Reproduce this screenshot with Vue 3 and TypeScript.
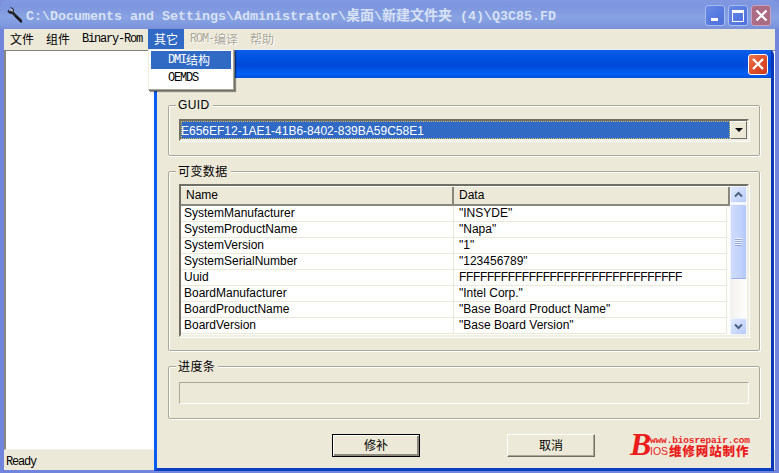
<script setup lang="ts">
interface Row { name: string; data: string }
const rows: Row[] = [
  { name: 'SystemManufacturer', data: '"INSYDE"' },
  { name: 'SystemProductName', data: '"Napa"' },
  { name: 'SystemVersion', data: '"1"' },
  { name: 'SystemSerialNumber', data: '"123456789"' },
  { name: 'Uuid', data: 'FFFFFFFFFFFFFFFFFFFFFFFFFFFFFFFF' },
  { name: 'BoardManufacturer', data: '"Intel Corp."' },
  { name: 'BoardProductName', data: '"Base Board Product Name"' },
  { name: 'BoardVersion', data: '"Base Board Version"' }
]
</script>

<template>
  <div class="win">
    <header class="titlebar">
      <svg class="appicon" width="17" height="17" viewBox="0 0 17 17">
        <path d="M1 2.5 L3 4.6 L5 3.6 L4.6 1.4 L2.6 .4 L5.2 .6 L7 2.4 L6.8 5 L15 13 L13.6 15.6 L5 7 L2.6 6.8 L.6 5 Z" fill="#26282e" />
        <path d="M8.6 8.4 L15.4 14.6 L14.4 16 L7.6 9.6 Z" fill="#15161a" />
        <path d="M3.4 1.6 L5.8 2.4 L6 4.4 L4.8 4.2 Z" fill="#c9ced8" />
      </svg>
      <div class="title">C:\Documents and Settings\Administrator\<span class="tcjk">桌面</span>\<span class="tcjk">新建文件夹</span> (4)\Q3C85.FD</div>
      <div class="caps">
        <button class="cap"><i class="min"></i></button>
        <button class="cap"><i class="max"></i></button>
        <button class="cap closeoff">
          <svg width="13" height="13" viewBox="0 0 13 13"><path d="M1.5 1.5 L11.5 11.5 M11.5 1.5 L1.5 11.5" stroke="#fff" stroke-width="2.2" /></svg>
        </button>
      </div>
    </header>

    <div class="frame">
      <nav class="menubar">
        <span class="mi cjk">文件</span>
        <span class="mi cjk">组件</span>
        <span class="mi mono">Binary-Rom</span>
        <span class="mi cjk active">其它</span>
        <span class="mi off"><span class="mono">ROM-</span><span class="cjk">编译</span></span>
        <span class="mi off cjk">帮助</span>
      </nav>
      <div class="client">
        <div class="leftpane"></div>
        <div class="status mono">Ready</div>
      </div>
    </div>

    <section class="dialog">
      <div class="dlgtitle">
        <button class="dlgclose">
          <svg width="14" height="14" viewBox="0 0 14 14"><path d="M2 2 L12 12 M12 2 L2 12" stroke="#fff" stroke-width="2.3" /></svg>
        </button>
      </div>
      <div class="dlgbody">
        <div class="group g1">
          <span class="legend">GUID</span>
          <div class="combo">
            <div class="comboval"><span>E656EF12-1AE1-41B6-8402-839BA59C58E1</span></div>
            <div class="combobtn"><i></i></div>
          </div>
        </div>

        <div class="group g2">
          <span class="legend cjkui">可变数据</span>
          <div class="list">
            <div class="listmain">
              <div class="lhead">
                <div class="hc c1">Name</div>
                <div class="hc c2">Data</div>
              </div>
              <div v-for="r in rows" :key="r.name" class="lrow">
                <div class="cell c1">{{ r.name }}</div>
                <div class="cell c2" :class="{ tight: r.name === 'Uuid' }">{{ r.data }}</div>
              </div>
            </div>
            <div class="sbar">
              <div class="sbtn">
                <svg width="9" height="7" viewBox="0 0 9 7"><path d="M1 5.5 L4.5 2 L8 5.5" fill="none" stroke="#4d6185" stroke-width="2" /></svg>
              </div>
              <div class="thumb"><i></i><i></i><i></i><i></i></div>
              <div class="track"></div>
              <div class="sbtn">
                <svg width="9" height="7" viewBox="0 0 9 7"><path d="M1 1.5 L4.5 5 L8 1.5" fill="none" stroke="#4d6185" stroke-width="2" /></svg>
              </div>
            </div>
          </div>
        </div>

        <div class="group g3">
          <span class="legend cjkui">进度条</span>
          <div class="progress"></div>
        </div>

        <div class="footer">
          <button class="btn default cjkui">修补</button>
          <button class="btn cjkui second">取消</button>
          <div class="logo">
            <span class="logob">B</span>
            <div class="logotext">
              <div class="logourl">www.biosrepair.com</div>
              <div class="logoline"><span class="logoios">IOS</span><span class="logocn">维修网站制作</span></div>
            </div>
          </div>
        </div>
      </div>
    </section>

    <div class="dropdown">
      <div class="ddi sel"><span class="mono">DMI</span><span class="cjk">结构</span></div>
      <div class="ddi"><span class="mono">OEMDS</span></div>
    </div>
  </div>
</template>

<style>
html, body { margin: 0; background: #7b8fdc; }
</style>

<style scoped>
.win {
  position: relative;
  width: 779px;
  height: 473px;
  overflow: hidden;
  background: #7285dc;
  border-radius: 7px 7px 0 0;
  display: flex;
  flex-direction: column;
  font-family: "Liberation Sans", Arial, sans-serif;
  font-size: 12px;
  color: #000;
}
.titlebar {
  height: 29px;
  flex: none;
  display: flex;
  align-items: center;
  padding: 0 8px 0 7px;
  box-sizing: border-box;
  background: linear-gradient(180deg, #8299e2 0%, #7c95de 20%, #89a2e2 60%, #7f99e0 85%, #7a90da 100%);
}
.appicon { flex: none; margin-right: 2px; margin-top: 2px; }
.title {
  flex: 1;
  font: bold 13.33px "Liberation Mono", monospace;
  color: #d6e1f6;
  white-space: nowrap;
  margin-top: 2px;
}
.tcjk { font: 14px "Noto Sans CJK SC", sans-serif; font-weight: 700; line-height: 1; }
.caps { display: flex; gap: 3px; margin-top: 2px; }
.cap {
  width: 20px;
  height: 21px;
  padding: 0;
  border: 1px solid #a9bcf0;
  border-radius: 3px;
  background: linear-gradient(135deg, #6a8ae4 0%, #587be0 50%, #4d70dc 100%);
  display: flex;
  align-items: center;
  justify-content: center;
  position: relative;
}
.closeoff {
  background: #ac6b85;
  border-color: #c7a3bd;
}
.min { display: block; width: 7px; height: 3px; background: #fff; margin: 7px 0 0 -1px; }
.max { display: block; width: 10px; height: 8px; border: 1px solid #fff; border-top-width: 3px; }
.frame {
  flex: 1;
  display: flex;
  flex-direction: column;
  padding: 0 4px 3px;
  min-height: 0;
}
.menubar {
  height: 20px;
  flex: none;
  display: flex;
  align-items: stretch;
  background: #ece9d8;
}
.mi {
  padding: 0 6px;
  display: flex;
  align-items: center;
  white-space: nowrap;
}
.active { background: #316ac5; color: #fff; }
.off { color: #aca899; text-shadow: 1px 1px 0 #fff; }
.cjk { font: 12px "Noto Sans CJK SC", sans-serif; padding-bottom: 2px; }
.cjkui { font: 12px "Noto Sans CJK SC", sans-serif; }
.mono {
  font: 12px "Liberation Mono", monospace;
  letter-spacing: -1.2px;
}
.client {
  flex: 1;
  display: flex;
  flex-direction: column;
  min-height: 0;
  background: #ece9d8;
}
.leftpane {
  flex: 1;
  margin-top: 1px;
  background: #fff;
  border-top: 1px solid #808080;
  border-left: 2px solid #8a887c;
  border-bottom: 1px solid #f4f2e8;
}
.status {
  height: 20px;
  flex: none;
  box-sizing: border-box;
  padding: 3px 0 0 2px;
  display: flex;
  align-items: center;
}
.dialog {
  position: absolute;
  left: 154px;
  top: 49px;
  width: 620px;
  height: 422px;
  box-sizing: border-box;
  border: 3px solid #0a47d8;
  border-top: 1px solid #e8effc;
  border-left-color: #0b5cf0;
  border-bottom-color: #0a3fc4;
  border-right-color: #0836b8;
  border-radius: 6px 6px 0 0;
  background: #ece9d8;
  display: flex;
  flex-direction: column;
}
.dlgtitle {
  height: 28px;
  flex: none;
  display: flex;
  justify-content: flex-end;
  align-items: center;
  padding-right: 3px;
  background: linear-gradient(180deg, #0a5de8 0%, #0054e3 25%, #0048d8 55%, #0060f4 85%, #0050dc 100%);
}
.dlgclose {
  width: 20px;
  height: 21px;
  padding: 0;
  border: 1px solid #fff;
  border-radius: 3px;
  background: linear-gradient(135deg, #e8774f 0%, #e0502c 50%, #c8381e 100%);
  display: flex;
  align-items: center;
  justify-content: center;
}
.dlgbody {
  flex: 1;
  min-height: 0;
  padding: 27px 11px 0;
  display: flex;
  flex-direction: column;
  gap: 15px;
}
.group {
  position: relative;
  box-sizing: border-box;
  border: 1px solid #aca899;
  border-radius: 2px;
  box-shadow: 1px 1px 0 #fff, inset 1px 1px 0 #fff;
  padding: 0 10px;
  flex: none;
}
.g1 { height: 51px; padding-top: 13px; }
.g2 { height: 180px; padding-top: 12px; }
.g3 { height: 53px; padding-top: 15px; }
.legend {
  position: absolute;
  left: 7px;
  top: -8px;
  padding: 0 3px 0 2px;
  background: #ece9d8;
  line-height: 14px;
  letter-spacing: .4px;
}
.combo {
  display: flex;
  height: 22px;
  box-sizing: border-box;
  border: 2px solid #716f64;
  border-right-color: #f1efe2;
  border-bottom-color: #f1efe2;
  box-shadow: 1px 1px 0 #fff;
  background: #fff;
}
.comboval {
  flex: 1;
  background: #316ac5;
  color: #fff;
  outline: 1px dotted #d8c060;
  outline-offset: -1px;
  display: flex;
  align-items: center;
  box-sizing: border-box;
  padding: 1px 0 0;
  line-height: 14px;
}
.combobtn {
  width: 17px;
  flex: none;
  box-sizing: border-box;
  background: #ece9d8;
  border: 1px solid #fff;
  border-right-color: #716f64;
  border-bottom-color: #716f64;
  display: flex;
  align-items: center;
  justify-content: center;
}
.combobtn i {
  display: block;
  width: 0;
  height: 0;
  border-left: 4px solid transparent;
  border-right: 4px solid transparent;
  border-top: 4px solid #000;
}
.list {
  height: 153px;
  box-sizing: border-box;
  display: flex;
  border: 2px solid #716f64;
  border-right-color: #f1efe2;
  border-bottom-color: #f1efe2;
  box-shadow: 1px 1px 0 #fff;
  background: #fff;
  overflow: hidden;
}
.listmain {
  flex: 1;
  min-width: 0;
  overflow: hidden;
}
.lhead {
  height: 20px;
  display: flex;
  box-sizing: border-box;
  background: #ece9d8;
  border-bottom: 2px solid #8a887c;
  border-top: 1px solid #fff;
}
.hc {
  line-height: 16px;
  box-sizing: border-box;
  border-right: 2px solid #8a887c;
}
.lhead .c1 { padding-left: 5px; }
.lhead .c2 { padding-left: 5px; }
.c1 { width: 273px; flex: none; }
.c2 { flex: 1; }
.lrow {
  height: 16px;
  display: flex;
  box-sizing: border-box;
  border-bottom: 1px solid #ece9d8;
  margin-right: 3px;
  background: #fff;
}
.cell {
  line-height: 15px;
  box-sizing: border-box;
  white-space: nowrap;
  overflow: hidden;
}
.cell.c1 { padding-left: 3px; border-right: 1px solid #ece9d8; }
.cell.c2 { padding-left: 5px; border-right: 1px solid #ece9d8; }
.tight { letter-spacing: -0.36px; }
.sbar {
  width: 17px;
  flex: none;
  display: flex;
  flex-direction: column;
  background: #fff;
}
.sbtn {
  height: 17px;
  flex: none;
  box-sizing: border-box;
  border: 1px solid #eef3fe;
  border-radius: 2px;
  background: linear-gradient(135deg, #e1eafe, #b9cbf8);
  display: flex;
  align-items: center;
  justify-content: center;
}
.thumb {
  height: 75px;
  flex: none;
  box-sizing: border-box;
  margin-top: 1px;
  border: 1px solid #eef3fe;
  border-bottom-color: #9bb0e6;
  border-radius: 2px;
  background: linear-gradient(90deg, #cfdcfd, #c3d3fc 60%, #b4c8f8);
  display: flex;
  flex-direction: column;
  align-items: center;
  justify-content: center;
  gap: 1px;
}
.thumb i { display: block; width: 7px; height: 1px; background: #eef4fe; box-shadow: 0 1px 0 #93a9e0; }
.track { flex: 1; background: linear-gradient(90deg, #f3f1ec, #fefefe); }
.progress {
  height: 22px;
  box-sizing: border-box;
  border: 1px solid #aca899;
  border-right-color: #fff;
  border-bottom-color: #fff;
  background: #ece9d8;
}
.footer {
  display: flex;
  align-items: flex-start;
  padding-left: 164px;
  height: 23px;
  flex: none;
}
.btn {
  width: 88px;
  height: 23px;
  padding: 0 0 2px;
  box-sizing: border-box;
  background: #ece9d8;
  color: #000;
  border: 1px solid #fff;
  border-right-color: #716f64;
  border-bottom-color: #716f64;
  box-shadow: inset -1px -1px 0 #aca899;
  line-height: 18px;
}
.btn.default {
  border: 1px solid #000;
  box-shadow: inset 1px 1px 0 #fff, inset -2px -2px 0 #8a887c;
}
.second { margin-left: 87px; }
.logo {
  margin-left: 35px;
  margin-top: -1px;
  display: flex;
  color: #ea1c1c;
  height: 24px;
}
.logob {
  font: italic bold 32px/23px "Liberation Serif", serif;
  width: 20px;
  flex: none;
}
.logotext { display: flex; flex-direction: column; }
.logourl {
  font: bold 9.5px/9px "Liberation Mono", monospace;
  letter-spacing: -0.15px;
  white-space: nowrap;
  margin-top: 3px;
}
.logoline { display: flex; align-items: center; height: 12px; }
.logoios {
  font: 10.5px/12px "Liberation Sans", sans-serif;
  white-space: nowrap;
  width: 19px;
  flex: none;
}
.logocn {
  font: 900 12.5px/12px "Noto Sans CJK SC", sans-serif;
  letter-spacing: .9px;
  white-space: nowrap;
}
.dropdown {
  position: absolute;
  left: 148px;
  top: 49px;
  width: 86px;
  height: 41px;
  box-sizing: border-box;
  background: #fff;
  border: 1px solid #aca899;
  border-top-color: #f1efe2;
  border-left-color: #f1efe2;
  padding: 1px 2px;
  box-shadow: 1px 1px 0 #716f64, 2px 2px 1px rgba(0, 0, 0, .4);
}
.ddi {
  height: 18px;
  padding-left: 17px;
  display: flex;
  align-items: center;
}
.ddi.sel { background: #316ac5; color: #fff; }
</style>
